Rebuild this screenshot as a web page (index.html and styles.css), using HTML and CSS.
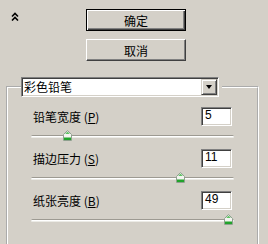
FILE: index.html
```html
<!DOCTYPE html>
<html lang="zh">
<head>
    <meta charset="UTF-8">
    <title>彩色铅笔</title>
    <link rel="stylesheet" href="styles.css">
</head>
<body>
    <div class="top">
        <svg class="collapse" width="8" height="9" viewBox="0 0 8 9">
            <polyline points="1,4.5 4,1.5 7,4.5" fill="none" stroke="#000" stroke-width="1.6"/>
            <polyline points="1,8.5 4,5.5 7,8.5" fill="none" stroke="#000" stroke-width="1.6"/>
        </svg>
        <div class="actions">
            <button class="btn btn-default">确定</button>
            <button class="btn">取消</button>
        </div>
    </div>
    <fieldset class="group">
        <legend>
            <div class="combo">
                <div class="combo-text">彩色铅笔</div>
                <div class="combo-arrow"><span class="tri"></span></div>
            </div>
        </legend>
        <div class="fields">
            <div class="field">
                <div class="field-head">
                    <span class="field-label">铅笔宽度 (<u>P</u>)</span>
                    <div class="field-value">5</div>
                </div>
                <div class="slider">
                    <div class="track"></div>
                    <svg class="thumb" style="left: 32px" width="9" height="11" viewBox="0 0 9 11">
                        <path d="M4.5 0.5 L8.5 4.5 V10.5 H0.5 V4.5 Z" fill="#f4f4f0" stroke="#8fa08f"/>
                        <rect x="1" y="7.5" width="7" height="2.5" fill="#21a32b"/>
                        <path d="M4.5 1.6 L6.8 4 H2.2 Z" fill="#5fc265"/>
                    </svg>
                </div>
            </div>
            <div class="field">
                <div class="field-head">
                    <span class="field-label">描边压力 (<u>S</u>)</span>
                    <div class="field-value">11</div>
                </div>
                <div class="slider">
                    <div class="track"></div>
                    <svg class="thumb" style="left: 145px" width="9" height="11" viewBox="0 0 9 11">
                        <path d="M4.5 0.5 L8.5 4.5 V10.5 H0.5 V4.5 Z" fill="#f4f4f0" stroke="#8fa08f"/>
                        <rect x="1" y="7.5" width="7" height="2.5" fill="#21a32b"/>
                        <path d="M4.5 1.6 L6.8 4 H2.2 Z" fill="#5fc265"/>
                    </svg>
                </div>
            </div>
            <div class="field">
                <div class="field-head">
                    <span class="field-label">纸张亮度 (<u>B</u>)</span>
                    <div class="field-value">49</div>
                </div>
                <div class="slider">
                    <div class="track"></div>
                    <svg class="thumb" style="left: 193px" width="9" height="11" viewBox="0 0 9 11">
                        <path d="M4.5 0.5 L8.5 4.5 V10.5 H0.5 V4.5 Z" fill="#f4f4f0" stroke="#8fa08f"/>
                        <rect x="1" y="7.5" width="7" height="2.5" fill="#21a32b"/>
                        <path d="M4.5 1.6 L6.8 4 H2.2 Z" fill="#5fc265"/>
                    </svg>
                </div>
            </div>
        </div>
    </fieldset>
</body>
</html>
```

FILE: styles.css
```css
html, body {
    margin: 0;
    overflow: hidden;
}
body {
    width: 268px;
    height: 244px;
    background-color: #d4d0c8;
    color: #000;
    font-family: "Noto Sans CJK SC", sans-serif;
    font-size: 12px;
}
.top {
    display: flex;
    padding-top: 9px;
}
.collapse {
    display: block;
    margin: 3px 0 0 11px;
}
.actions {
    display: flex;
    flex-direction: column;
    gap: 8px;
    margin-left: 67px;
}
.btn {
    width: 100px;
    height: 22px;
    padding: 0;
    background-color: #d4d0c8;
    font-family: "Noto Sans CJK SC", sans-serif;
    font-size: 12px;
    color: #000;
    border: 1px solid;
    border-color: #fff #404040 #404040 #fff;
    box-shadow: inset -1px -1px 0 #808080;
}
.btn-default {
    border-color: #000;
    box-shadow: inset 1px 1px 0 #fff, inset -1px -1px 0 #404040, inset -2px -2px 0 #808080;
}
.group {
    width: 253px;
    box-sizing: border-box;
    min-width: 0;
    margin: 16px 0 0 6px;
    padding: 0 0 22px;
    border: 2px groove #fff;
}
legend {
    margin-left: 13px;
    padding: 0 3px 0 0;
}
.combo {
    display: flex;
    width: 198px;
    height: 20px;
    box-sizing: border-box;
    padding: 1px;
    background-color: #fff;
    border: 1px solid;
    border-color: #808080 #fff #fff #808080;
    box-shadow: inset 1px 1px 0 #404040, inset -1px -1px 0 #d4d0c8;
}
.combo-text {
    flex: 1;
    padding-left: 1px;
    line-height: 16px;
}
.combo-arrow {
    display: flex;
    justify-content: center;
    align-items: center;
    width: 16px;
    height: 16px;
    box-sizing: border-box;
    background-color: #d4d0c8;
    border: 1px solid;
    border-color: #d4d0c8 #404040 #404040 #d4d0c8;
    box-shadow: inset 1px 1px 0 #fff, inset -1px -1px 0 #808080;
}
.tri {
    width: 0;
    height: 0;
    border-left: 3.5px solid transparent;
    border-right: 3.5px solid transparent;
    border-top: 4px solid #000;
}
.fields {
    display: flex;
    flex-direction: column;
    gap: 8px;
    padding-top: 10px;
}
.field {
    padding: 0 23px;
}
.field-head {
    display: flex;
    justify-content: space-between;
    align-items: center;
    height: 19px;
    padding: 0 2px;
}
.field-label {
    white-space: nowrap;
}
.field-value {
    width: 31px;
    height: 19px;
    box-sizing: border-box;
    padding: 0 0 0 3px;
    background-color: #fff;
    font-family: "Liberation Sans", sans-serif;
    font-size: 12px;
    line-height: 15px;
    border: 1px solid;
    border-color: #808080 #fff #fff #808080;
    box-shadow: inset 1px 1px 0 #404040, inset -1px -1px 0 #d4d0c8;
}
.slider {
    position: relative;
    height: 11px;
    margin-top: 4px;
}
.track {
    position: relative;
    top: 5px;
    height: 1px;
    background-color: #fff;
    border-top: 1px solid #9d9a92;
    border-bottom: 1px solid #ecebe6;
    border-radius: 2px;
}
.thumb {
    position: absolute;
    top: 0;
}
```
